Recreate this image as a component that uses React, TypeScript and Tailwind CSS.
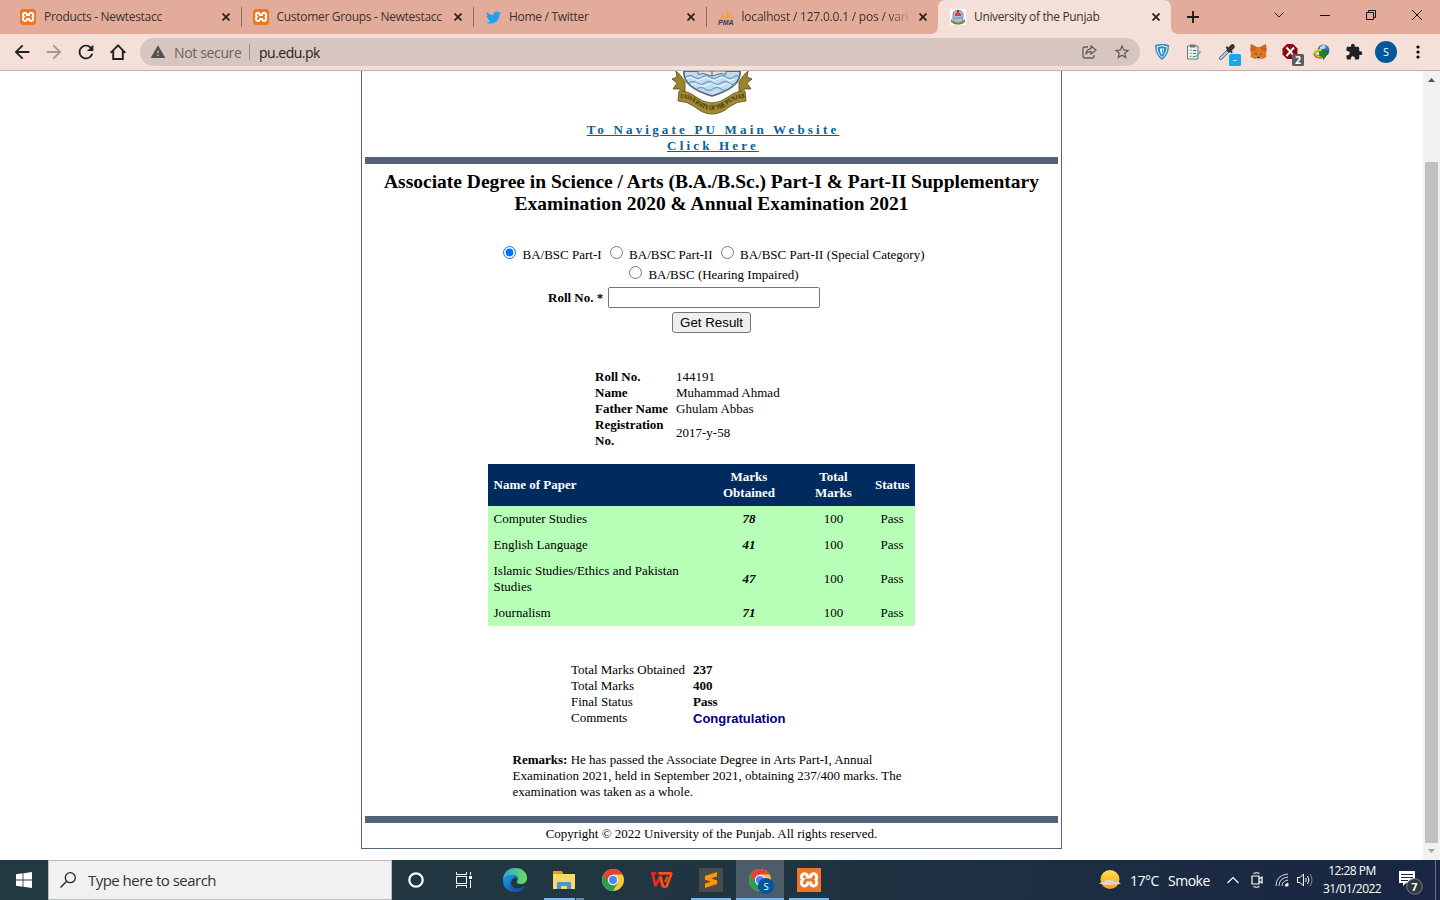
import React from "react";
import { FaTwitter } from "react-icons/fa";
import { SiXampp } from "react-icons/si";
import { MdArrowBack, MdArrowForward, MdExtension, MdRefresh, MdStarBorder, MdWarning } from "react-icons/md";

const Xampp = ({ className }: { className: string }) => (
  <span className={`${className} flex shrink-0 items-center justify-center overflow-hidden rounded-[2px] bg-white text-[#ee7526]`}>
    <SiXampp className="h-full w-full scale-[1.04]" />
  </span>
);

const Pma = () => (
  <svg className="h-4 w-4 shrink-0" viewBox="0 0 16 16">
    <path d="M1 10.500C3 9 4.500 7 5 3.500c1.500 2.500 1.500 5 .5 7zM6.500 10.500C8.500 7 9 4 8.500 0c3 4 4 7 3 10.500zM12.500 10.500c.6-2 .6-4 0-6 2 2 3 4 3 6z" fill="#f8a13c" />
    <text x="0" y="16" fontSize="6.500" fontWeight="bold" fontStyle="italic" textLength="15.500" lengthAdjust="spacingAndGlyphs" fontFamily="Liberation Sans" fill="#2d3765">PMA</text>
  </svg>
);

const MiniCrest = () => (
  <svg className="h-4 w-4 shrink-0 bg-white" viewBox="0 0 16 16">
    <path d="M3 5c0-5 10-5 10 0v5c0 3-3 4-5 5-2-1-5-2-5-5z" fill="#a9bfd4" stroke="#7c8a98" />
    <path d="M5 5q3-4 6 0v2H5z" fill="#df3b36" />
    <path d="M7 1h2v2H7z" fill="#42566c" />
    <path d="M1 10l2 2q5 3 10 0l2-2v3l-3 2q-4 1-8 0l-3-2z" fill="#8c7c31" />
    <path d="M4 9h8" stroke="#668eb4" />
  </svg>
);

const Cross = () => (
  <svg className="h-2 w-2 shrink-0" viewBox="0 0 8 8">
    <path d="M.5.5l7 7M7.5.5l-7 7" stroke="#26221f" strokeWidth="1.800" />
  </svg>
);

function Tab({ icon, title, sep, active, fade, tw }: { icon: React.ReactNode; title: string; sep?: boolean; active?: boolean; fade?: boolean; tw: string }) {
  return (
    <div className="relative flex h-[34px] w-[232.5px] shrink-0 items-center pl-3">
      {active && (
        <svg className="absolute -left-2 top-0 h-[34px] w-[249px]" viewBox="0 0 249 34">
          <path d="M0 34q8 0 8-8V8q0-8 8-8h217q8 0 8 8v18q0 8 8 8z" fill="#f5e0d9" />
        </svg>
      )}
      <span className="relative flex h-4 w-4 items-center justify-center">{icon}</span>
      <span className={`relative ml-2 w-[168px] whitespace-nowrap text-[12px] leading-4 text-[#3a3230] ${tw} ${fade ? "[mask-image:linear-gradient(to_right,black_145px,transparent_171px)]" : ""}`}>{title}</span>
      <span className="relative ml-[9.5px] flex"><Cross /></span>
      {sep && <span className="-mr-px ml-auto h-5 w-px bg-[#8c6d63]" />}
    </div>
  );
}

function Toolbar() {
  return (
    <div className="flex h-[37px] items-center border-b border-[#c2b0ab] bg-[#f5e0d9] text-[#202124]">
      <div className="flex w-[140px] items-center pl-[11px]">
        <MdArrowBack className="h-[22px] w-[22px]" />
        <MdArrowForward className="ml-[10px] h-[22px] w-[22px] text-[#a39694]" />
        <MdRefresh className="ml-[10px] h-[22px] w-[22px]" />
        <svg className="ml-[13px] h-4 w-4" viewBox="0 0 16 16" fill="none" stroke="currentColor" strokeWidth="1.900">
          <path d="M.7 8.800L8 1.400l7.300 7.400M3.200 7v8h9.600V7" />
        </svg>
      </div>
      <div className="flex h-7 w-[1000px] items-center rounded-full bg-[#d7c6bf]">
        <MdWarning className="ml-[10px] h-4 w-4 text-[#54504f]" />
        <span className="ml-2 w-[75px] whitespace-nowrap text-[14px] tracking-[-0.35px] text-[#6a6462]">Not secure</span>
        <span className="h-4 w-px bg-[#9a8d88]" />
        <span className="ml-[9px] text-[14px] tracking-[-0.5px] text-[#252220]">pu.edu.pk</span>
        <svg className="ml-auto h-[14px] w-[15px]" viewBox="0 0 15 14" fill="none" stroke="#625b59" strokeWidth="1.300">
          <path d="M6 2H3Q1 2 1 4v7q0 2 2 2h7q2 0 2-2v-1" />
          <path d="M9 1l5 4-5 4V6.700Q5.500 6.500 4 9q.2-4.500 5-5.300z" strokeLinejoin="round" />
        </svg>
        <MdStarBorder className="ml-4 mr-[9px] h-[18px] w-[18px] text-[#5f5856]" />
      </div>
      <div className="flex items-center">
        <svg className="ml-[15px] h-4 w-[14px]" viewBox="0 0 14 16">
          <path d="M0 1q7-2 14 0 0 10-7 15Q0 11 0 1z" fill="#1c8bd0" />
          <path d="M2 2.600q5-1.500 10 0 0 7-5 11-5-4-5-11z" fill="none" stroke="#fff" />
          <path d="M4.800 4.500h4.400q0 4-2.200 6.500-2.200-2.500-2.200-6.500z" fill="#fff" />
          <path d="M7 5.500h1.500q0 3-1.500 4z" fill="#1c8bd0" />
        </svg>
        <svg className="ml-[17px] h-4 w-4" viewBox="0 0 16 16">
          <path d="M1.500 2h10.500v13H1.500z" fill="#eef0ee" stroke="#6e7976" />
          <path d="M4 .5h5.500v3H4z" fill="#6e7976" />
          <path d="M3.500 6l1 1 1-1.500M3.500 9l1 1 1-1.500M3.500 12l1 1 1-1.500" fill="none" stroke="#1b9a91" strokeWidth=".8" />
          <path d="M7 6.500h3.500M7 9.500h3M7 12.500h2" stroke="#666" />
          <path d="M10 13l4.500-6" stroke="#4bb9ad" strokeWidth="1.600" />
        </svg>
        <svg className="ml-[17px] h-6 w-[22px] translate-y-[3px]" viewBox="0 0 22 24">
          <path d="M1.800 15.200L9 8" stroke="#3d5d73" strokeWidth="3.400" strokeLinecap="round" />
          <path d="M1.800 15.200L9 8" stroke="#a9d5ef" strokeWidth="2" strokeLinecap="round" />
          <path d="M8 4.500l4.500 4.500" stroke="#383838" strokeWidth="2.200" strokeLinecap="round" />
          <path d="M10 7l3.500-3.500" stroke="#383838" strokeWidth="4.600" strokeLinecap="round" />
          <rect x="10" y="11" width="12" height="12" rx="1.500" fill="#13a7f5" />
          <path d="M14.500 17.500h3" stroke="#fff" />
        </svg>
        <svg className="ml-[9px] h-4 w-[17px]" viewBox="0 0 17 16">
          <path d="M1 0l5.500 3h4L16 0l1 6-1 3 .5 4-4 2H5L.5 13 1 9 0 6z" fill="#e2761b" />
          <path d="M1 0l5.500 3L5 7 1 7zM16 0l-5.500 3L12 7l4 0z" fill="#c4642a" />
          <path d="M5.500 14.500l1.500-2.500h3l1.500 2.500-1.500 1H7z" fill="#c9b6a6" />
          <path d="M7.300 12.500h2.400l.5 1.500H6.800z" fill="#28313e" />
          <path d="M5 9l2 1-1 1zM12 9l-2 1 1 1z" fill="#28313e" />
        </svg>
        <svg className="ml-[15px] h-6 w-[22px] translate-y-[3px]" viewBox="0 0 22 24">
          <path d="M5 1h6l4.500 4.500v6L11 16H5L.5 11.500v-6z" fill="#870b13" />
          <path d="M4.500 4.500l3.800 4L12 4.500M8.500 8.500L4.500 13M8.500 8.500l3 4.500" stroke="#fff" strokeWidth="1.900" fill="none" />
          <rect x="10" y="11" width="12" height="12" rx="1.500" fill="#5d5d5d" />
          <text x="16" y="21" textAnchor="middle" fontSize="10.500" fontWeight="bold" fill="#fff" fontFamily="Open Sans">2</text>
        </svg>
        <svg className="ml-[9px] h-4 w-[17px]" viewBox="0 0 17 16">
          <circle cx="10.500" cy="6.500" r="6" fill="#3c72b8" />
          <path d="M7 3q3-3 5-1.500l1 2-3 2-3-.5z" fill="#b8d6e8" />
          <ellipse cx="6.500" cy="9.500" rx="5.500" ry="3.600" fill="none" stroke="#e7ce24" strokeWidth="2" />
          <ellipse cx="6.500" cy="9.500" rx="4" ry="2.200" fill="#e9efe5" stroke="#49a63a" strokeWidth="1" />
          <path d="M1 9.500q1 5 8 4.500" fill="none" stroke="#d23c25" strokeWidth="1.200" />
          <path d="M6 8.500l3-.5V5.500l6.500 2.500-5 7.500-1-3L7 12z" fill="#18871c" stroke="#0c4b10" strokeWidth=".6" />
        </svg>
        <MdExtension className="ml-[15px] h-[18px] w-[18px]" />
        <span className="ml-3 flex h-[22px] w-[22px] items-center justify-center rounded-full bg-[#01579b] text-[11px] text-white">S</span>
        <svg className="ml-[19px] h-[14px] w-[4px]" viewBox="0 0 4 14">
          <circle cx="2" cy="2" r="1.600" /><circle cx="2" cy="7" r="1.600" /><circle cx="2" cy="12" r="1.600" />
        </svg>
      </div>
    </div>
  );
}

const Crest = () => (
  <svg className="h-[44px] w-[80px]" viewBox="0 0 80 44">
    <path d="M12 0h56v3q-1 14-28 22Q13 17 12 3z" fill="#c4dcef" stroke="#5d6874" strokeWidth="1.800" />
    <path d="M14 6q4-3 8 0t8 0 8 0 8 0 8 0 8 0 4 0M17 12q4-3 8 0t8 0 8 0 8 0 8 0 6 0M25 18q4-3 8 0t8 0 8 0 5 0" fill="none" stroke="#6aa5c8" strokeWidth="1.400" />
    <path d="M14 8q4-3 8 0t8 0 8 0 8 0 8 0 8 0M19 14q4-3 8 0t8 0 8 0 8 0 8 0" fill="none" stroke="#f5fafc" />
    <path d="M26 0h28v3.500l-5-1-9 2.500-9-2.500-5 1z" fill="#e3e4e5" stroke="#68707a" />
    <path d="M40 0v5" stroke="#555" />
    <path d="M4 0l5 5 4 6v10l-6-3H1l4-6-5-4 5-2zM76 0l-5 5-4 6v10l6-3h6l-4-6 5-4-5-2z" fill="#9b852b" stroke="#554715" strokeWidth=".8" />
    <path d="M7 20q10 0 17 6 8 6 16 6t16-6q7-6 17-6l1 10q-9 0-17 6-8 7-17 7t-17-7q-8-6-17-6z" fill="#a38c2e" stroke="#554715" strokeWidth=".8" />
    <path id="ribbonText" d="M8 27q9 1 15 5 8 7 17 7t17-7q6-4 15-5" fill="none" />
    <text fontSize="6.500" fontWeight="bold" fontFamily="Liberation Serif" fill="#302808">
      <textPath href="#ribbonText" textLength="70" lengthAdjust="spacingAndGlyphs">UNIVERSITY OF THE PUNJAB</textPath>
    </text>
  </svg>
);

const papers: [string, number][] = [
  ["Computer Studies", 78],
  ["English Language", 41],
  ["Islamic Studies/Ethics and Pakistan Studies", 47],
  ["Journalism", 71],
];

const details = [
  ["Roll No.", "144191"],
  ["Name", "Muhammad Ahmad"],
  ["Father Name", "Ghulam Abbas"],
  ["Registration No.", "2017-y-58"],
];

function Option({ label, checked }: { label: string; checked?: boolean }) {
  return (
    <label className="flex h-5 items-center whitespace-nowrap">
      <input type="radio" name="part" defaultChecked={checked} className="mb-[5px] mr-[6px] h-[13px] w-[13px]" />
      <span>{label}</span>
    </label>
  );
}

function ResultPage() {
  return (
    <main className="flex h-[789px] bg-white">
      <div className="flex flex-1 pl-[361px]">
        <section className="flex h-[778px] w-[701px] flex-col border-x border-b border-[#54637a] px-[3px] font-['Liberation_Serif',serif] text-[13px] leading-4 text-black">
          <div className="flex h-[51px] justify-center"><Crest /></div>
          <a className="pl-[3px] text-center font-bold tracking-[3.18px] text-[#05629a] underline">To Navigate PU Main Website<br />Click Here</a>
          <div className="mt-[3px] h-[7px] w-[693px] shrink-0 bg-[#54637a]" />
          <h1 className="mt-[7px] whitespace-nowrap text-center text-[19.5px] font-bold leading-[22px]">
            Associate Degree in Science / Arts (B.A./B.Sc.) Part-I &amp; Part-II Supplementary<br />Examination 2020 &amp; Annual Examination 2021
          </h1>
          <div className="mt-[30px] flex justify-center gap-[8.5px] pl-[5px]">
            <Option label="BA/BSC Part-I" checked />
            <Option label="BA/BSC Part-II" />
            <Option label="BA/BSC Part-II (Special Category)" />
          </div>
          <div className="flex justify-center pl-[5px]"><Option label="BA/BSC (Hearing Impaired)" /></div>
          <div className="mt-[2px] flex h-[21px] items-center pl-[183px]">
            <b className="w-[60px] whitespace-nowrap">Roll No. *</b>
            <input className="h-[21px] w-[212px] rounded-[2px] border border-[#767676] bg-white" />
          </div>
          <button className="ml-[307px] mt-1 h-[21px] w-[79px] shrink-0 whitespace-nowrap rounded-[3px] border border-[#767676] bg-[#efefef] font-['Liberation_Sans',sans-serif] text-[13.33px] leading-[19px]">Get Result</button>
          <dl className="mt-[36px] pl-[230px]">
            {details.map(([k, v]) => (
              <div key={k} className="flex items-center">
                <dt className="w-[81px] pr-1 font-bold">{k}</dt>
                <dd>{v}</dd>
              </div>
            ))}
          </dl>
          <table className="ml-[123px] mt-[15px] w-[427px] table-fixed">
            <thead>
              <tr className="h-[42px] bg-[#002b5e] font-bold text-white">
                <td className="w-[219px] pl-[5.5px]">Name of Paper</td>
                <td className="w-[84px] text-center">Marks<br />Obtained</td>
                <td className="w-[84px] pl-px text-center">Total<br />Marks</td>
                <td className="w-[40px] pr-[6px] text-center">Status</td>
              </tr>
            </thead>
            <tbody className="bg-[#b7ffb7]">
              {papers.map(([n, m]) => (
                <tr key={n}>
                  <td className="py-[5px] pl-[5.5px] pr-5">{n}</td>
                  <td className="text-center font-bold italic">{m}</td>
                  <td className="pl-px text-center">100</td>
                  <td className="pr-[6px] text-center">Pass</td>
                </tr>
              ))}
            </tbody>
          </table>
          <dl className="mt-[36px] grid grid-cols-[122px_auto] pl-[206px]">
            <dt>Total Marks Obtained</dt><dd className="font-bold">237</dd>
            <dt>Total Marks</dt><dd className="font-bold">400</dd>
            <dt>Final Status</dt><dd className="font-bold">Pass</dd>
            <dt>Comments</dt><dd className="pt-px font-['Liberation_Sans',sans-serif] font-bold text-[#000080]">Congratulation</dd>
          </dl>
          <p className="ml-[147.500px] mt-[25px] whitespace-nowrap">
            <b>Remarks:</b> He has passed the Associate Degree in Arts Part-I, Annual<br />
            Examination 2021, held in September 2021, obtaining 237/400 marks. The<br />
            examination was taken as a whole.
          </p>
          <div className="mt-4 h-[7px] w-[693px] shrink-0 bg-[#54637a]" />
          <p className="mt-[3px] text-center">Copyright © 2022 University of the Punjab. All rights reserved.</p>
        </section>
      </div>
      <div className="flex w-[17px] flex-col items-center bg-[#f1f1f1]">
        <svg className="h-[17px] w-[17px]" viewBox="0 0 17 17"><path d="M5 11h7L8.500 7z" fill="#505050" /></svg>
        <div className="mt-[74px] h-[681px] w-[13px] bg-[#c1c1c1]" />
        <svg className="h-[17px] w-[17px]" viewBox="0 0 17 17"><path d="M5 6h7l-3.500 4z" fill="#a3a3a3" /></svg>
      </div>
    </main>
  );
}

const Chrome = ({ badge }: { badge?: boolean }) => (
  <svg className="h-6 w-6 overflow-visible" viewBox="0 0 24 24">
    <circle cx="12" cy="12" r="11" fill="#fbc934" />
    <path d="M12 12L2.500 6.500A11 11 0 0 0 12 23l5-8.500z" fill="#2a9d50" />
    <path d="M2.500 6.500A11 11 0 0 1 21.500 6.500H12L7 14z" fill="#de4539" />
    <circle cx="12" cy="12" r="5.200" fill="#fff" />
    <circle cx="12" cy="12" r="4.100" fill="#4687f4" />
    {badge && (
      <>
        <circle cx="18" cy="18" r="8" fill="#01579b" />
        <text x="18" y="21.500" textAnchor="middle" fontSize="9.500" fill="#fff" fontFamily="Open Sans">S</text>
      </>
    )}
  </svg>
);

function TaskButton({ children, bar, active }: { children: React.ReactNode; bar?: boolean; active?: boolean }) {
  return (
    <div className={`flex h-10 w-12 shrink-0 flex-col items-center ${active ? "bg-[#4c5c69]" : ""}`}>
      <div className="flex h-[38px] items-center pt-[2px]">{children}</div>
      {bar && <div className={`h-[2px] bg-[#76b9ed] ${active ? "w-12" : "w-10"}`} />}
    </div>
  );
}

function Taskbar() {
  return (
    <footer className="flex h-10 items-center bg-linear-to-r from-[#213941] via-[#203541] to-[#192543] text-white">
      <div className="flex w-12 justify-center">
        <svg className="h-4 w-4" viewBox="0 0 16 16" fill="#fff"><path d="M0 2.200L6.600 1.300v6.300H0zM7.400 1.200L16 0v7.600H7.400zM0 8.400h6.600v6.300L0 13.800zM7.400 8.400H16V16l-8.600-1.200z" /></svg>
      </div>
      <div className="flex h-10 w-[344px] items-center border border-[#b9bbbc] bg-[#f1f1f1] text-[#333]">
        <svg className="ml-[11px] h-4 w-4" viewBox="0 0 16 16" fill="none" stroke="#222" strokeWidth="1.300"><circle cx="10.300" cy="5.700" r="5" /><path d="M6.700 9.300L.5 15.500" /></svg>
        <span className="ml-3 whitespace-nowrap text-[15px] tracking-[-0.53px]">Type here to search</span>
      </div>
      <TaskButton><svg className="h-4 w-4" viewBox="0 0 16 16"><circle cx="8" cy="8" r="6.700" fill="none" stroke="#fff" strokeWidth="2.200" /></svg></TaskButton>
      <TaskButton>
        <svg className="h-4 w-4" viewBox="0 0 16 16" fill="none" stroke="#fff"><path d="M.5 0v2.500h10V0M.5 16v-2.500h10V16M.5 4.500h10v7H.5zM14.500 0v3M14.500 8v8" /><path d="M13 4h3v3h-3z" fill="#fff" stroke="none" /></svg>
      </TaskButton>
      <div className="ml-[3px] flex gap-px">
        <TaskButton>
          <svg className="h-6 w-6" viewBox="0 0 24 24">
            <defs>
              <linearGradient id="edgeTop"><stop offset="0" stopColor="#2aa6e1" /><stop offset="1" stopColor="#68e15a" /></linearGradient>
              <linearGradient id="edgeBody" x2="1" y2="1"><stop offset="0" stopColor="#1b9de2" /><stop offset="1" stopColor="#0c4ba0" /></linearGradient>
            </defs>
            <path d="M0 12C0 4 6 0 12 0c8 0 12 5 12 10 0 4-3 6-6 6-3 0-5-1-4-3 2-2 0-6-4-6-5 0-10 3-10 7z" fill="url(#edgeTop)" />
            <path d="M0 13c1-4 5-6 9-6 3 0 5 2 5.500 4C12 8 8 11 8 15c0 5 6 8 13 4-2 3-5 5-9 5C5 24 0 19 0 13z" fill="url(#edgeBody)" />
            <path d="M8 14c0 5 5 9 13 4.500l1 .3c-2 3-5 5.200-9 5.200-5-1-7-6-5-10z" fill="#1459ad" />
          </svg>
        </TaskButton>
        <div className="flex h-10 w-12 shrink-0 flex-col items-center">
          <div className="flex h-[38px] items-center pt-[2px]">
            <svg className="h-5 w-[22px]" viewBox="0 0 22 20"><path d="M0 1h9l1 2v3H0z" fill="#e3a20d" /><path d="M0 4h22v15H0z" fill="#fcd867" /><path d="M4 19v-6q0-1 1-1h12q1 0 1 1v6h-4v-3H8v3z" fill="#3f97dc" /></svg>
          </div>
          <div className="flex h-[2px] w-10 gap-px"><div className="w-[31px] bg-[#76b9ed]" /><div className="flex-1 bg-[#5a8db3]" /></div>
        </div>
        <TaskButton><Chrome /></TaskButton>
        <TaskButton>
          <svg className="h-4 w-[22px]" viewBox="0 0 22 16" fill="none" strokeWidth="2.600">
            <path d="M0 1.400h5.500" stroke="#e8221c" />
            <path d="M1.500 1l3 13 4.500-9 2.500 9.500" stroke="#ee2b1a" strokeLinejoin="bevel" />
            <path d="M7.500 1.400H20.500L15.500 14.500h-3.500L9.500 4" stroke="#ff4e1a" strokeLinejoin="bevel" />
            <path d="M14 10l2.500-5.500" stroke="#ff4e1a" strokeWidth="2" />
          </svg>
        </TaskButton>
        <TaskButton bar>
          <svg className="h-6 w-6" viewBox="0 0 24 24"><rect width="24" height="24" rx="1" fill="#4b4b4b" /><path d="M6 8l12-4v4.500l-6 2 6 1.800V16L6 20v-4.500l6-2-6-1.800z" fill="#ff9800" /></svg>
        </TaskButton>
        <TaskButton bar active><Chrome badge /></TaskButton>
        <TaskButton bar><Xampp className="h-6 w-6" /></TaskButton>
      </div>
      <svg className="ml-[266px] h-[22px] w-[22px] shrink-0" viewBox="0 0 22 22">
        <defs><linearGradient id="sun" x2="0" y2="1"><stop offset="0" stopColor="#ffdf47" /><stop offset="1" stopColor="#f49b22" /></linearGradient></defs>
        <circle cx="11" cy="10.500" r="9.500" fill="url(#sun)" />
        <path d="M0 14.500q2-2 5-1.500 2-3.500 6-2 3-1 4 2 4-1 7 1.500-3 1.500-8 1-5 2-14-1z" fill="#e6d3bd" />
      </svg>
      <span className="ml-[9px] w-[38px] whitespace-nowrap text-[14px] tracking-[-0.5px]">17°C</span>
      <span className="w-[59px] whitespace-nowrap text-[14px] tracking-[-0.5px]">Smoke</span>
      <svg className="h-2 w-3 shrink-0" viewBox="0 0 12 8" fill="none" stroke="#fff" strokeWidth="1.200"><path d="M.5 7L6 1.500 11.500 7" /></svg>
      <svg className="ml-[12px] h-4 w-3 shrink-0" viewBox="0 0 12 16" fill="none" stroke="#fff" strokeWidth="1.200"><path d="M2.500 1.500q3-1.500 6 0M2.500 14.500q3 1.500 6 0M1 4h7v8H1zM8 7l3-2v6L8 9" /></svg>
      <svg className="ml-[12px] h-[14px] w-[14px] shrink-0" viewBox="0 0 14 14" fill="none" stroke="#ddd"><path d="M1 13Q1 2 13 1M4 13q0-8 9-9M7 13q0-5 6-6" /><path d="M10 13q0-2 3-3v3z" fill="#fff" /></svg>
      <svg className="ml-[8px] h-[14px] w-4 shrink-0" viewBox="0 0 16 14" fill="none" stroke="#fff"><path d="M.5 4.500H3L6.500 1v12L3 9.500H.5zM8.500 5q1.500 2 0 4M10.500 3q3 4 0 8" /><path d="M13 1q4 6 0 12" stroke="#7c8494" /></svg>
      <div className="ml-[7px] flex w-[64px] flex-col items-center whitespace-nowrap text-[12px] leading-[18px]">
        <span className="tracking-[-0.5px]">12:28 PM</span>
        <span className="tracking-[-0.55px]">31/01/2022</span>
      </div>
      <svg className="ml-[13px] mt-[6px] h-[26px] w-[26px] shrink-0" viewBox="0 0 26 26">
        <path d="M2 1h16v12H9l-3 3v-3H2z" fill="#fff" /><path d="M4 4.500h12M4 7.500h12M4 10.500h7" stroke="#1b2a45" />
        <circle cx="17.500" cy="16.500" r="7.800" fill="#303740" stroke="#777f87" />
        <text x="17.500" y="20.500" textAnchor="middle" fontSize="11" fontWeight="bold" fill="#fff" fontFamily="Open Sans">7</text>
      </svg>
      <span className="ml-auto mr-1 h-10 w-px bg-[#6b7488]" />
    </footer>
  );
}

export default function App() {
  return (
    <div className="h-[900px] w-[1440px] overflow-hidden bg-white font-['Open_Sans','Noto_Sans',sans-serif]">
      <header className="flex h-[34px] items-center bg-[#e3ac9a] pl-2">
        <Tab sep icon={<Xampp className="h-4 w-4" />} title="Products - Newtestacc" tw="tracking-[-0.3px]" />
        <Tab sep icon={<Xampp className="h-4 w-4" />} title="Customer Groups - Newtestacc" tw="tracking-[-0.3px]" />
        <Tab sep icon={<FaTwitter className="h-[15px] w-[15px] text-[#1da1f2]" />} title="Home / Twitter" tw="tracking-[-0.3px]" />
        <Tab fade icon={<Pma />} title="localhost / 127.0.0.1 / pos / vari" tw="tracking-[-0.2px]" />
        <Tab active icon={<MiniCrest />} title="University of the Punjab" tw="tracking-[-0.35px]" />
        <svg className="relative ml-[16.500px] h-3 w-3" viewBox="0 0 12 12" stroke="#211c1a" strokeWidth="1.900"><path d="M6 0v12M0 6h12" /></svg>
        <div className="ml-[75px] flex items-center pb-[5px]">
          <svg className="h-[6px] w-[10px]" viewBox="0 0 10 6" fill="none" stroke="#2b2320"><path d="M.5.5L5 5 9.500.5" /></svg>
          <svg className="ml-[36px] h-[10px] w-[10px]" viewBox="0 0 10 10"><path d="M0 5.500h10" stroke="#111" /></svg>
          <svg className="ml-[36px] h-[10px] w-[10px]" viewBox="0 0 10 10" fill="none" stroke="#111"><path d="M.5 2.500h7v7h-7zM2.500 2.500v-2h7v7h-2" /></svg>
          <svg className="ml-[36px] h-[10px] w-[10px]" viewBox="0 0 10 10" stroke="#111"><path d="M0 0l10 10M10 0L0 10" /></svg>
        </div>
      </header>
      <Toolbar />
      <ResultPage />
      <Taskbar />
    </div>
  );
}
